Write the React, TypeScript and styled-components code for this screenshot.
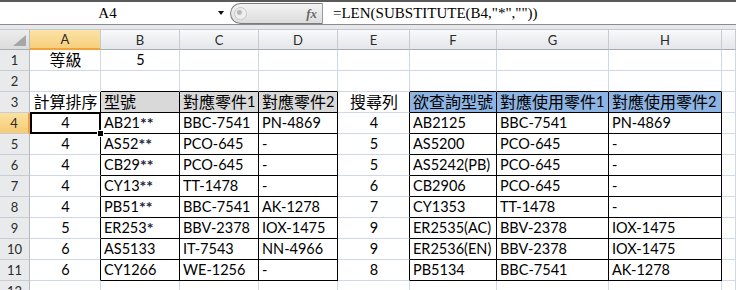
import React from 'react';
import styled, { createGlobalStyle, css } from 'styled-components';

const GlobalStyle = createGlobalStyle`
  html, body {
    margin: 0;
    padding: 0;
    background: #fff;
  }
  body {
    overflow: hidden;
  }
`;

const GRID = '#d0d7e5';
const LINE = '#000';

const Window = styled.div`
  width: 736px;
  height: 290px;
  overflow: hidden;
  background: #fff;
  font-family: Lato, "Noto Sans CJK TC", sans-serif;
  color: #000;
`;

const TopEdge = styled.div`
  height: 2px;
  background: #5a5a5a;
`;

const FormulaBar = styled.div`
  display: flex;
  height: 23px;
  box-sizing: border-box;
  border-bottom: 1px solid #8c8c8c;
  background: #fff;
`;

const NameBox = styled.div`
  display: flex;
  align-items: center;
  width: 230px;
  flex: none;
`;

const NameText = styled.div`
  width: 215px;
  text-align: center;
  font-family: "Liberation Serif", serif;
  font-size: 15px;
`;

const DropArrow = styled.div`
  width: 0;
  height: 0;
  margin-left: 3px;
  border-left: 3px solid transparent;
  border-right: 3px solid transparent;
  border-top: 4px solid #111;
`;

const FxPill = styled.div`
  display: flex;
  align-items: center;
  justify-content: space-between;
  width: 93px;
  flex: none;
  box-sizing: border-box;
  margin-top: 1px;
  height: 21px;
  padding: 0 5px 0 3px;
  border: 1px solid #7d7d7d;
  border-right: 1px solid #9a9a9a;
  border-radius: 11px 0 0 11px;
  background: linear-gradient(#f4f4f4, #dcdcdc);
`;

const Knob = styled.div`
  width: 13px;
  height: 13px;
  border-radius: 50%;
  box-sizing: border-box;
  border: 1px solid #c8c8c8;
  background: radial-gradient(circle at 40% 40%, #b9b9b9 0 2px, #ececec 3px, #f7f7f7);
`;

const FxLabel = styled.span`
  font-family: "Liberation Serif", serif;
  font-style: italic;
  font-weight: bold;
  font-size: 13px;
  color: #6a6a6a;
`;

const FormulaText = styled.div`
  flex: 1;
  display: flex;
  align-items: center;
  padding-left: 10px;
  font-family: "Liberation Serif", serif;
  font-size: 15px;
  white-space: nowrap;
`;

const Gap = styled.div`
  height: 4px;
  background: #e6e8eb;
`;

const Sheet = styled.div`
  display: grid;
  grid-template-columns: 30px 71px 79px 79px 79px 72px 87px 112px 113px 1fr;
  grid-auto-rows: 21px;
`;

const headerBase = css`
  box-sizing: border-box;
  display: flex;
  align-items: center;
  justify-content: center;
  font-size: 13px;
  color: #2b2b2b;
`;

const Corner = styled.div`
  ${headerBase};
  position: relative;
  background: linear-gradient(#ededed, #dcdcdc);
  border-right: 1px solid #b9bcc0;
  border-bottom: 1px solid #a9acb0;
  border-top: 1px solid #c4c7cb;

  &::after {
    content: '';
    position: absolute;
    right: 3px;
    bottom: 3px;
    width: 0;
    height: 0;
    border-left: 13px solid transparent;
    border-bottom: 11px solid #a6a6a6;
  }
`;

const ColHead = styled.div<{ $active?: boolean }>`
  ${headerBase};
  border-top: 1px solid #c4c7cb;
  border-right: 1px solid #c8ccd1;
  border-bottom: 1px solid #a9acb0;
  background: ${(p) =>
    p.$active ? 'linear-gradient(#fbe3a6, #f7cf7d)' : 'linear-gradient(#f8f9fa, #e3e6ea)'};
  ${(p) =>
    p.$active &&
    css`
      border-bottom: 2px solid #f2a23a;
    `}
`;

const RowHead = styled.div<{ $active?: boolean }>`
  ${headerBase};
  border-right: 1px solid #b5b9be;
  border-bottom: 1px solid #c9cdd2;
  background: ${(p) => (p.$active ? 'linear-gradient(#fbe1a0, #f6cb74)' : '#e9eaec')};
  ${(p) =>
    p.$active &&
    css`
      border-right: 2px solid #f2a23a;
    `}
`;

const Cell = styled.div<{
  $align?: 'left' | 'center';
  $fill?: string;
  $right?: boolean;
  $bottom?: boolean;
  $selected?: boolean;
}>`
  box-sizing: border-box;
  position: relative;
  display: flex;
  align-items: flex-end;
  justify-content: ${(p) => (p.$align === 'center' ? 'center' : 'flex-start')};
  padding: 0 2px 1px 3px;
  font-size: 14.5px;
  line-height: 19px;
  white-space: nowrap;
  background: ${(p) => p.$fill || '#fff'};
  border-right: 1px solid ${(p) => (p.$right ? LINE : GRID)};
  border-bottom: 1px solid ${(p) => (p.$bottom ? LINE : GRID)};

  ${(p) =>
    p.$selected &&
    css`
      &::after {
        content: '';
        position: absolute;
        left: 0;
        top: -1px;
        right: -1px;
        bottom: -1px;
        border: 2px solid #000;
        z-index: 2;
      }
      &::before {
        content: '';
        position: absolute;
        right: -4px;
        bottom: -4px;
        width: 5px;
        height: 5px;
        background: #000;
        border: 1px solid #fff;
        z-index: 3;
      }
    `}
`;

const Zh = styled.span`
  font-size: 16px;
`;

const Star = styled.span`
  font-size: 16px;
  font-weight: bold;
  color: #1c2340;
`;

type Align = 'left' | 'center';

const renderText = (text: string) =>
  text.split(/([\u3400-\u9fff]+|\*+)/).map((part, i) => {
    if (/[\u3400-\u9fff]/.test(part)) return <Zh key={i}>{part}</Zh>;
    if (part.startsWith('*')) return <Star key={i}>{part}</Star>;
    return part;
  });

const columns = ['A', 'B', 'C', 'D', 'E', 'F', 'G', 'H', ''];

const rows: string[][] = [
  ['等級', '5', '', '', '', '', '', '', ''],
  ['', '', '', '', '', '', '', '', ''],
  ['計算排序', '型號', '對應零件1', '對應零件2', '搜尋列', '欲查詢型號', '對應使用零件1', '對應使用零件2', ''],
  ['4', 'AB21**', 'BBC-7541', 'PN-4869', '4', 'AB2125', 'BBC-7541', 'PN-4869', ''],
  ['4', 'AS52**', 'PCO-645', '-', '5', 'AS5200', 'PCO-645', '-', ''],
  ['4', 'CB29**', 'PCO-645', '-', '5', 'AS5242(PB)', 'PCO-645', '-', ''],
  ['4', 'CY13**', 'TT-1478', '-', '6', 'CB2906', 'PCO-645', '-', ''],
  ['4', 'PB51**', 'BBC-7541', 'AK-1278', '7', 'CY1353', 'TT-1478', '-', ''],
  ['5', 'ER253*', 'BBV-2378', 'IOX-1475', '9', 'ER2535(AC)', 'BBV-2378', 'IOX-1475', ''],
  ['6', 'AS5133', 'IT-7543', 'NN-4966', '9', 'ER2536(EN)', 'BBV-2378', 'IOX-1475', ''],
  ['6', 'CY1266', 'WE-1256', '-', '8', 'PB5134', 'BBC-7541', 'AK-1278', ''],
  ['', '', '', '', '', '', '', '', ''],
];

// column index 0 = A ... 7 = H, 8 = partial I
const isTableCol = (c: number) => (c >= 1 && c <= 3) || (c >= 5 && c <= 7);

const cellProps = (r: number, c: number) => {
  const row = r + 1;
  const inBody = row >= 3 && row <= 11;
  const align: Align = c === 0 || c === 4 ? 'center' : 'left';
  let fill: string | undefined;
  if (row === 3 && c >= 1 && c <= 3) fill = '#d9d9d9';
  if (row === 3 && c >= 5 && c <= 7) fill = '#8db4e2';
  if (row === 1) return { align: 'center' as Align, fill, right: false, bottom: false };
  const right = inBody && (isTableCol(c) || c === 0 || c === 4);
  const bottom = (inBody && isTableCol(c)) || (row === 2 && isTableCol(c));
  return { align, fill, right, bottom };
};

const App = () => {
  return (
    <Window>
      <GlobalStyle />
      <TopEdge />
      <FormulaBar>
        <NameBox>
          <NameText>A4</NameText>
          <DropArrow />
        </NameBox>
        <FxPill>
          <Knob />
          <FxLabel>fx</FxLabel>
        </FxPill>
        <FormulaText>=LEN(SUBSTITUTE(B4,"*",""))</FormulaText>
      </FormulaBar>
      <Gap />
      <Sheet>
        <Corner />
        {columns.map((col, i) => (
          <ColHead key={i} $active={col === 'A'}>
            {col}
          </ColHead>
        ))}
        {rows.map((cells, r) => (
          <React.Fragment key={r}>
            <RowHead $active={r === 3}>{r + 1}</RowHead>
            {cells.map((text, c) => {
              const p = cellProps(r, c);
              return (
                <Cell
                  key={c}
                  $align={p.align}
                  $fill={p.fill}
                  $right={p.right}
                  $bottom={p.bottom}
                  $selected={r === 3 && c === 0}
                >
                  {renderText(text)}
                </Cell>
              );
            })}
          </React.Fragment>
        ))}
      </Sheet>
    </Window>
  );
};

export default App;
